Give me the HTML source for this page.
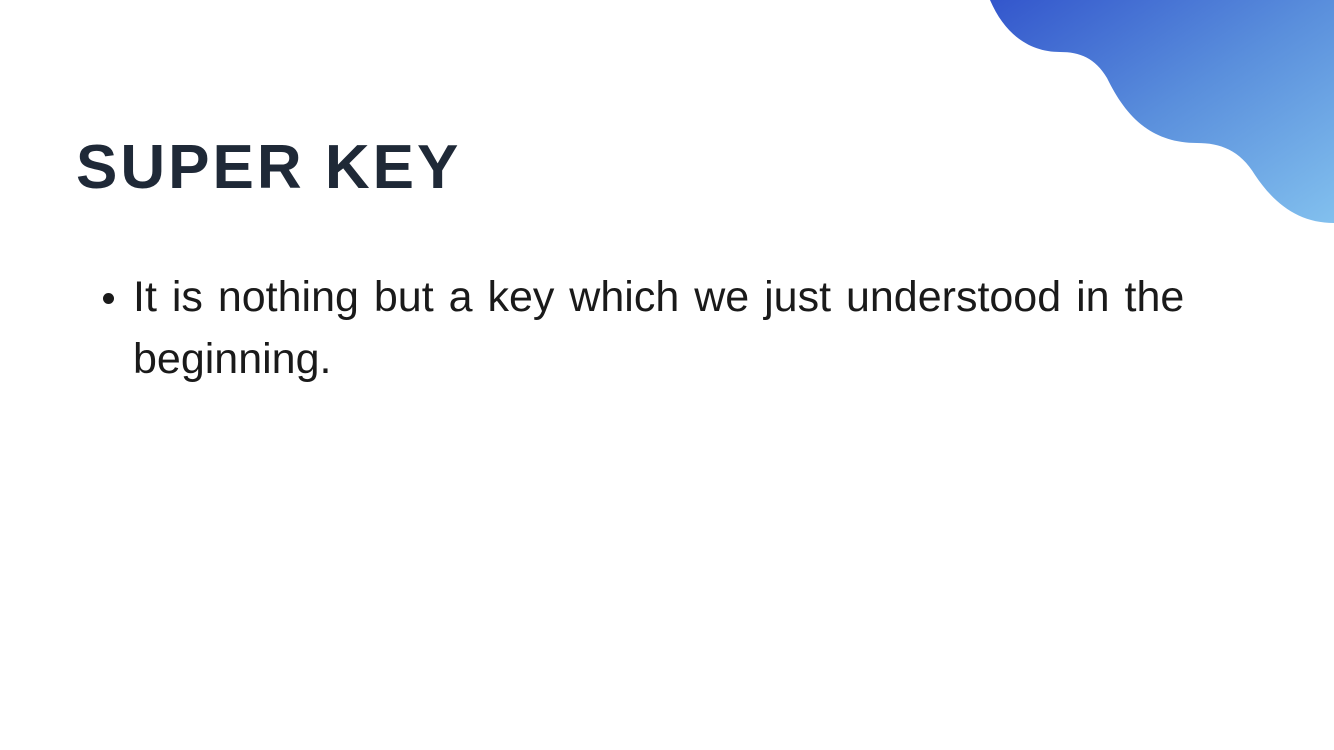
<!DOCTYPE html>
<html><head><style>
body{margin:0;width:1334px;height:750px;background:#fff;position:relative;overflow:hidden;font-family:"Liberation Sans",sans-serif}
h1{position:absolute;left:76px;top:132px;margin:0;font-size:62px;font-weight:bold;color:#1f2937;letter-spacing:3px}
.t{position:absolute;left:133px;top:266px;font-size:43px;line-height:62px;color:#1a1a1a;width:1160px;word-spacing:3px}
.dot{position:absolute;left:103px;top:293px;width:11px;height:11px;border-radius:50%;background:#1a1a1a}
</style></head><body>
<svg width="1334" height="750" style="position:absolute;left:0;top:0">
<defs><linearGradient id="g" x1="0" y1="0" x2="1" y2="1" gradientUnits="objectBoundingBox"><stop offset="0" stop-color="#3356cc"/><stop offset="0.5" stop-color="#5a8fdc"/><stop offset="1" stop-color="#82c0ee"/></linearGradient></defs>
<path d="M990 0 C1005 35 1030 52 1060 52 C1080 52 1095 58 1107 78 C1125 115 1150 143 1197 143 C1220 143 1240 150 1255 175 C1275 205 1300 223 1334 223 L1334 0 Z" fill="url(#g)"/>
</svg>
<h1>SUPER KEY</h1>
<div class="dot"></div>
<div class="t">It is nothing but a key which we just understood in the beginning.</div>
</body></html>
